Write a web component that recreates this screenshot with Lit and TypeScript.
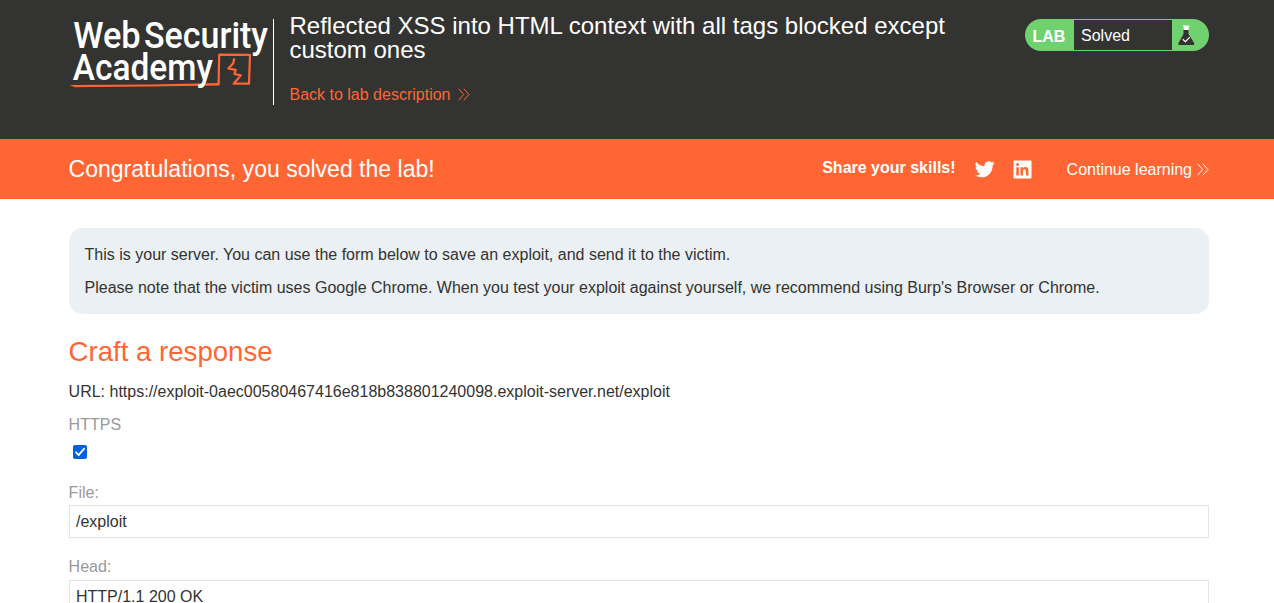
import { LitElement, html, css, svg } from "lit";
import { customElement } from "lit/decorators.js";

const chevrons = svg`<path d="M.5 .7 5.7 6.5 .5 12.3M5.8 .7 11 6.5 5.800 12.3" fill="none" stroke="currentColor" stroke-width="1"/>`;

@customElement("academy-logo")
export class AcademyLogo extends LitElement {
  static styles = css`
    :host { display: block; width: 204px; height: 90px; }
    svg { display: block; overflow: visible; }
    .word { font-family: Roboto, sans-serif; font-weight: 500; fill: #fff; }
    .line { fill: none; stroke: #ff6633; stroke-linejoin: round; }
  `;
  render() {
    return html`<svg width="204" height="90" viewBox="69 15 204 90">
      <path d="M69.500 85 L150 84.500 L219.500 83 V85.400 L150 86.500 L90 87.100 L75 87.200Z" fill="#ff6633" />
      <path class="line" stroke-width="2.200" d="M218.600 84.300 L219.200 54.700 L250 54.800 L249 83.600 L233.600 83.700 L240.800 75.400 L234.400 74 L235.700 69.900 L228.300 68.500 L233.300 63.300 L234.200 58.200" />
      <text class="word" font-size="37.500" x="73.200" y="47.500" textLength="67.500" lengthAdjust="spacingAndGlyphs">Web</text>
      <text class="word" font-size="37.500" x="144" y="47.500" textLength="124" lengthAdjust="spacingAndGlyphs">Security</text>
      <text class="word" font-size="36.500" x="72.800" y="79.800" textLength="140" lengthAdjust="spacingAndGlyphs">Academy</text>
    </svg>`;
  }
}

@customElement("lab-status")
export class LabStatus extends LitElement {
  static styles = css`
    :host { display: flex; box-sizing: border-box; width: 184px; height: 32px; border-radius: 16px; background: #6fd26f; color: #fff; overflow: hidden; font-size: 16px; line-height: 32px; }
    .tag { width: 49px; padding-left: 7.500px; box-sizing: border-box; font-weight: bold; line-height: 35px; }
    .state { width: 98px; height: 30px; margin-top: 1px; padding-left: 7px; box-sizing: border-box; background: #333332; line-height: 31px; }
    svg { display: block; margin: 6px 0 0 6px; }
  `;
  render() {
    return html`<span class="tag">LAB</span><span class="state">Solved</span>
      <svg width="17" height="21" viewBox="0 0 17 21">
        <path d="M5.500 4.500H10.500V9L16.300 18.300Q16.600 20 15 20H1.500Q-.1 20 .4 18.300L5.500 9Z" fill="#333332" />
        <path d="M5 .5H11.500V1.500H10.800V5H5.700V1.500H5Z" fill="#fff" />
        <path d="M4.700 14.300 7.400 16.700 11.800 12.200" fill="none" stroke="#fff" stroke-width="1.200" />
      </svg>`;
  }
}

@customElement("app-root")
export class AppRoot extends LitElement {
  static styles = css`
    :host { display: block; height: 603px; overflow: hidden; background: #fff; color: #333332; font-family: "Liberation Sans", Arial, sans-serif; font-size: 16px; line-height: 18px; }
    .top { box-sizing: border-box; height: 139px; padding: 15px 65px 0 69px; background: #333332; display: flex; align-items: flex-start; }
    .intro { box-sizing: border-box; height: 86px; margin-top: 4px; padding-left: 15.500px; border-left: 1px solid #fff; flex: 1; }
    h2 { margin: -5px 0 0; width: 680px; font-size: 24px; line-height: 24px; font-weight: normal; color: #fff; }
    .back { display: flex; margin-top: 24px; color: #ff6633; }
    .back svg { margin: 2px 0 0 8px; }
    .top lab-status { margin-top: 4px; }
    .banner { box-sizing: border-box; height: 60px; padding: 0 65px 0 68.500px; background: #ff6633; color: #fff; display: flex; align-items: center; }
    .congrats { flex: 1; font-size: 23.040px; line-height: 28px; }
    .share { font-weight: bold; margin: 0 19px 3px 0; }
    .bird { margin-right: 18px; }
    .linked { margin-right: 35px; }
    .next { display: flex; align-items: center; padding-top: 1px; }
    .next svg { margin-left: 5px; margin-top: -1px; }
    main { padding: 29px 65px 0 69px; }
    .note { box-sizing: border-box; height: 86px; padding: 18px 15.600px; border-radius: 14px; background: #eaf0f3; }
    .note p { margin: 0 0 15px; }
    h1 { margin: 22px 0 0 -.4px; font-size: 27.600px; line-height: 32px; font-weight: normal; color: #ff6633; }
    .url { margin: 15px 0 15px -.4px; }
    .label { display: block; margin-left: -.4px; color: #999; }
    .check { display: block; margin: 11px 0 0 4px; }
    .file { margin-top: 25px; }
    .field { box-sizing: border-box; height: 33px; margin-top: 3px; border: 1px solid #e4e4e4; padding: 7px 6px; }
    .head { margin-top: 20px; }
    .area { height: 80px; margin-top: 4px; }
  `;
  render() {
    return html`
      <header class="top">
        <academy-logo></academy-logo>
        <div class="intro">
          <h2>Reflected XSS into HTML context with all tags blocked except custom ones</h2>
          <div class="back">Back to lab description<svg width="13" height="13">${chevrons}</svg></div>
        </div>
        <lab-status></lab-status>
      </header>
      <section class="banner">
        <span class="congrats">Congratulations, you solved the lab!</span>
        <span class="share">Share your skills!</span>
        <svg class="bird" width="20" height="20" viewBox="0 0 24 24"><path fill="#fff" d="M23.600 4.900a9.700 9.700 0 0 1-2.800.8 4.900 4.900 0 0 0 2.100-2.700 9.700 9.700 0 0 1-3.100 1.200A4.900 4.900 0 0 0 11.500 8.600A13.900 13.900 0 0 1 1.400 3.500a4.900 4.900 0 0 0 1.500 6.500 4.900 4.900 0 0 1-2.200-.6v.1a4.900 4.900 0 0 0 3.900 4.800 4.900 4.900 0 0 1-2.200.1 4.900 4.900 0 0 0 4.600 3.400A9.800 9.800 0 0 1 0 19.800a13.900 13.900 0 0 0 7.500 2.200c9.100 0 14-7.700 13.700-14.600a10 10 0 0 0 2.400-2.500z" /></svg>
        <svg class="linked" width="19" height="19" viewBox="0 0 19 19"><path fill="#fff" fill-rule="evenodd" d="M1.500 .5H17.500a1 1 0 0 1 1 1V17.500a1 1 0 0 1-1 1H1.500a1 1 0 0 1-1-1V1.500a1 1 0 0 1 1-1ZM3.300 7.200V15.500H5.900V7.200ZM4.600 3.100a1.500 1.500 0 1 0 0 3 1.500 1.500 0 1 0 0-3ZM7.500 7.200V15.500H10.100V11.400Q10.100 9.300 11.600 9.300 12.900 9.300 12.900 11.400V15.500H15.500V10.900Q15.500 7 12.500 7 10.800 7 10 8.400V7.200Z" /></svg>
        <span class="next">Continue learning<svg width="12" height="13">${chevrons}</svg></span>
      </section>
      <main>
        <div class="note">
          <p>This is your server. You can use the form below to save an exploit, and send it to the victim.</p>
          <p>Please note that the victim uses Google Chrome. When you test your exploit against yourself, we recommend using Burp's Browser or Chrome.</p>
        </div>
        <h1>Craft a response</h1>
        <div class="url">URL: https://exploit-0aec00580467416e818b838801240098.exploit-server.net/exploit</div>
        <span class="label">HTTPS</span>
        <svg class="check" width="14" height="14" viewBox="0 0 14 14"><rect width="14" height="14" rx="2" fill="#0060df" /><path d="M3 7.300 5.700 10 11 3.800" fill="none" stroke="#fff" stroke-width="1.900" stroke-linecap="round" stroke-linejoin="round" /></svg>
        <span class="label file">File:</span>
        <div class="field">/exploit</div>
        <span class="label head">Head:</span>
        <div class="field area">HTTP/1.1 200 OK</div>
      </main>
    `;
  }
}
